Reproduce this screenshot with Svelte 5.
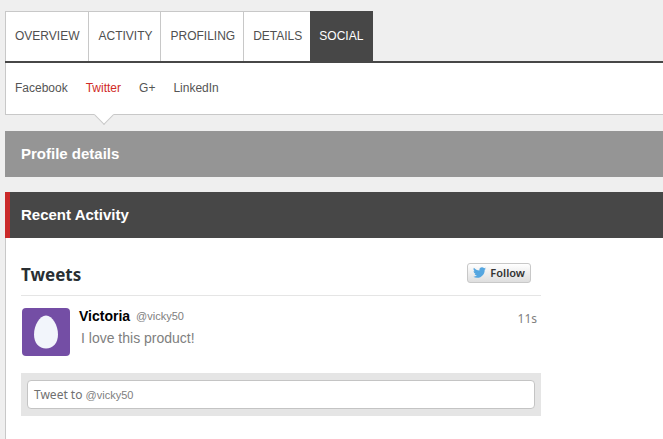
<script>
  const tabs = ['OVERVIEW', 'ACTIVITY', 'PROFILING', 'DETAILS', 'SOCIAL'];
  const networks = ['Facebook', 'Twitter', 'G+', 'LinkedIn'];
  let tab = $state('SOCIAL');
  let network = $state('Twitter');
  let message = $state('');
</script>

<div class="page">
  <nav class="tabs" aria-label="Profile sections">
    {#each tabs as name}
      <button class="tab" class:active={tab === name} onclick={() => (tab = name)}>{name}</button>
    {/each}
  </nav>

  <nav class="networks" aria-label="Social networks">
    {#each networks as name}
      <a
        href={'#' + name}
        class:current={network === name}
        onclick={(e) => { e.preventDefault(); network = name; }}>{name}</a>
    {/each}
  </nav>

  <h2 class="bar muted">Profile details</h2>
  <h2 class="bar open">Recent Activity</h2>

  <main class="panel">
    <section class="feed">
      <header class="feed-head">
        <h3>Tweets</h3>
        <button class="follow">
          <svg viewBox="0 0 24 24" width="13" height="13" aria-hidden="true">
            <path fill="#55a6e0" d="M23.95 4.57a10 10 0 0 1-2.82.78 4.96 4.96 0 0 0 2.16-2.73c-.95.56-2 .96-3.13 1.19a4.92 4.92 0 0 0-8.38 4.48C7.69 8.1 4.07 6.13 1.64 3.16a4.82 4.82 0 0 0-.67 2.48c0 1.71.87 3.21 2.19 4.1a4.9 4.9 0 0 1-2.23-.62v.06a4.92 4.92 0 0 0 3.95 4.83 5 5 0 0 1-2.21.08 4.94 4.94 0 0 0 4.6 3.42A9.87 9.87 0 0 1 0 19.54a14 14 0 0 0 7.55 2.21c9.05 0 14-7.5 14-13.98 0-.21 0-.42-.02-.63a9.94 9.94 0 0 0 2.46-2.55z" />
          </svg>
          Follow
        </button>
      </header>

      <article class="tweet">
        <svg class="avatar" viewBox="0 0 48 48" width="48" height="48" role="img" aria-label="Victoria">
          <rect width="48" height="48" rx="4" fill="#744ea5" />
          <path fill="#f2f5fb" d="M24 7.500C30.500 7.500 36 17.500 36 26.500C36 35 31 40.500 24 40.500C17 40.500 12 35 12 26.500C12 17.500 17.500 7.500 24 7.500Z" />
        </svg>
        <div class="body">
          <div class="who"><strong>Victoria</strong><span class="handle">@vicky50</span></div>
          <p>I love this product!</p>
        </div>
        <time>11s</time>
      </article>

      <div class="compose">
        <input id="reply" type="text" bind:value={message} />
        {#if !message}
          <label for="reply">Tweet to <span class="handle">@vicky50</span></label>
        {/if}
      </div>
    </section>
  </main>
</div>

<style>
  :global(body) {
    margin: 0;
    background: #efefef;
  }
  .page {
    box-sizing: border-box;
    min-height: 100vh;
    padding: 11px 0 0 5px;
    display: flex;
    flex-direction: column;
    font-family: "Liberation Sans", Arial, sans-serif;
    font-size: 12px;
    color: #555;
  }
  .tabs {
    display: flex;
    border-bottom: 2px solid #474747;
  }
  .tab {
    height: 50px;
    padding: 0 8px 2px 9px;
    border: solid #c8c8c8;
    border-width: 1px 0 0 1px;
    background: #fff;
    color: #505050;
    font: inherit;
  }
  .tab:first-child {
    padding-right: 9px;
  }
  .tab.active {
    padding: 0 10px 2px 8px;
    background: #474747;
    border-color: #474747;
    color: #fff;
  }
  .networks {
    display: flex;
    gap: 18px;
    padding: 17px 9px 18px;
    line-height: 16px;
    background: #fff;
    border-left: 1px solid #c8c8c8;
    border-bottom: 1px solid #c8c8c8;
  }
  .networks a {
    position: relative;
    color: #555;
    text-decoration: none;
  }
  .networks a.current {
    color: #d02b27;
  }
  .networks a.current::after {
    content: "";
    position: absolute;
    left: 50%;
    bottom: -26px;
    width: 14px;
    height: 14px;
    margin-left: -6px;
    box-sizing: border-box;
    background: #fff;
    border: solid #c8c8c8;
    border-width: 0 1px 1px 0;
    transform: rotate(45deg);
  }
  .bar {
    margin: 16px 0 0;
    padding: 0 16px;
    line-height: 46px;
    font-size: 15px;
    color: #fff;
  }
  .muted {
    background: #959595;
  }
  .open {
    margin-top: 15px;
    padding-left: 11px;
    background: #474747;
    border-left: 5px solid #ca2a2a;
  }
  .panel {
    flex: 1;
    padding: 22px 15px;
    background: #fff;
    border-left: 1px solid #c8c8c8;
  }
  .feed {
    max-width: 520px;
  }
  .feed-head {
    display: flex;
    align-items: center;
    justify-content: space-between;
    height: 35px;
    padding: 0 10px 0 0;
    border-bottom: 1px solid #e5e5e5;
  }
  h3 {
    margin: 0;
    padding-bottom: 6px;
    line-height: 24px;
    font-family: "Noto Sans", sans-serif;
    font-size: 17px;
    color: #292f33;
  }
  .follow {
    display: flex;
    align-items: center;
    gap: 4px;
    height: 20px;
    margin-bottom: 10px;
    padding: 0 5px;
    border: 1px solid #c8c8c8;
    border-radius: 3px;
    background: linear-gradient(#fff, #dedede);
    color: #333;
    font: 600 11px/18px "Noto Sans", sans-serif;
  }
  .tweet {
    display: flex;
    padding: 12px 4px 17px 1px;
  }
  .avatar {
    display: block;
    flex: none;
  }
  .body {
    flex: 1;
    padding-left: 9px;
  }
  .who {
    display: flex;
    gap: 6px;
    line-height: 17px;
  }
  .who strong {
    font-size: 14px;
    color: #000;
  }
  .handle {
    font-size: 11px;
    color: #808080;
    font-family: "Liberation Sans", Arial, sans-serif;
  }
  p {
    margin: 3px 0 0 2px;
    font-size: 14px;
    line-height: 20px;
    color: #808080;
  }
  time {
    font: 12px/22px "Noto Sans", sans-serif;
    color: #808080;
  }
  .compose {
    position: relative;
    padding: 7px 6px;
    background: #e5e5e5;
  }
  input {
    display: block;
    box-sizing: border-box;
    width: 100%;
    height: 29px;
    padding: 0 6px;
    border: 1px solid #c4c4c4;
    border-radius: 4px;
    background: #fff;
    font: 12px "Noto Sans", sans-serif;
    color: #333;
  }
  .compose label {
    position: absolute;
    left: 13px;
    top: 7px;
    line-height: 29px;
    font-family: "Noto Sans", sans-serif;
    color: #707070;
    pointer-events: none;
  }
</style>
